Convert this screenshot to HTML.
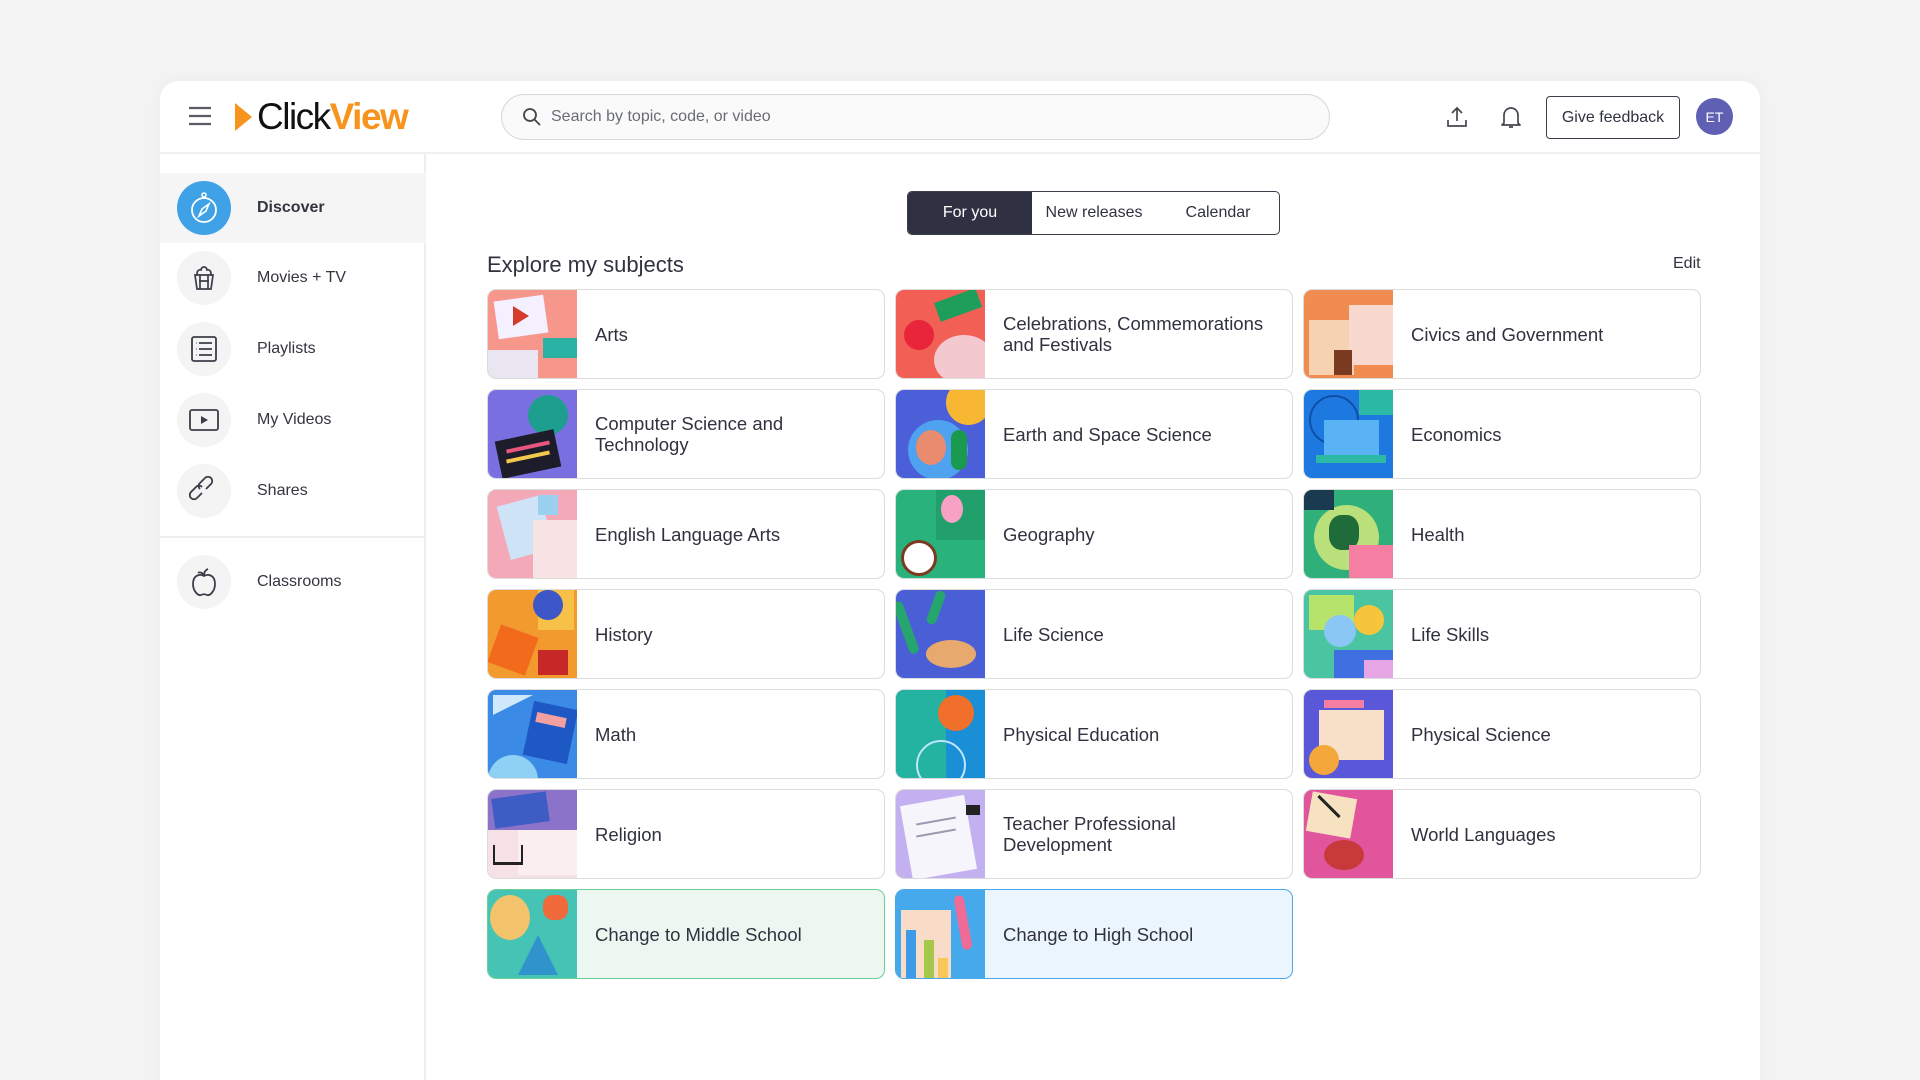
<!DOCTYPE html>
<html><head><meta charset="utf-8"><style>
*{box-sizing:border-box;margin:0;padding:0}
html,body{width:1920px;height:1080px;overflow:hidden}
body{background:#f3f3f3;font-family:"Liberation Sans",sans-serif;color:#30323f;position:relative}
.panel{position:absolute;left:160px;top:81px;width:1600px;height:1040px;background:#fff;border-radius:18px;box-shadow:0 0 14px rgba(0,0,0,0.04)}
.hdr{position:absolute;left:0;top:0;width:1600px;height:73px;border-bottom:2px solid #f0f0f0}
.side{position:absolute;left:0;top:73px;width:266px;height:967px;border-right:2px solid #eeeeee}
.nav{position:absolute;left:0;width:266px;height:70px;display:flex;align-items:center}
.nav .ic{position:absolute;left:17px;width:54px;height:54px;border-radius:50%;background:#f4f4f5;display:flex;align-items:center;justify-content:center}
.nav .lb{position:absolute;left:97px;font-size:16px;color:#33353f}
.abs{position:absolute}
.card{position:absolute;width:398px;height:90px;border:1.5px solid #dcdcdc;border-radius:9px;overflow:hidden;background:#fff}
.card .im{position:absolute;left:0;top:0;width:89px;height:90px;overflow:hidden}
.card .t{position:absolute;left:107px;top:0;height:88px;width:280px;display:flex;align-items:center;font-size:18.5px;line-height:21px;color:#30323f}
</style></head><body>
<div class="panel">
 <div class="hdr">
  <svg class="abs" style="left:28px;top:25px" width="24" height="20" viewBox="0 0 24 20"><path d="M1 2h22M1 10h22M1 18h22" stroke="#5a5c66" stroke-width="2.2"/></svg>
  <svg class="abs" style="left:75px;top:22px" width="17" height="28" viewBox="0 0 17 28"><path d="M0 0L17 14L0 28Z" fill="#f7941d"/></svg>
  <div class="abs" style="left:97px;top:15px;font-size:37px;letter-spacing:-1.5px;line-height:42px"><span style="color:#111">Click</span><span style="color:#f7941d;font-weight:bold">View</span></div>
  <div class="abs" style="left:341px;top:13px;width:829px;height:46px;border:1.5px solid #d8d8d8;border-radius:23px;background:#fafafa">
   <svg class="abs" style="left:20px;top:12px" width="20" height="20" viewBox="0 0 20 20"><circle cx="8" cy="8" r="6" stroke="#444" stroke-width="1.8" fill="none"/><path d="M12.5 12.5L18 18" stroke="#444" stroke-width="1.8"/></svg>
   <div class="abs" style="left:49px;top:13px;font-size:16px;color:#6a6c75">Search by topic, code, or video</div>
  </div>
  <svg class="abs" style="left:1285px;top:24px" width="24" height="24" viewBox="0 0 24 24"><path d="M12 16V3M7 8l5-5 5 5M3 15v6h18v-6" stroke="#45474f" stroke-width="1.7" fill="none"/></svg>
  <svg class="abs" style="left:1339px;top:23px" width="24" height="26" viewBox="0 0 24 26"><path d="M5 19V11a7 7 0 0 1 14 0v8l2 2H3z M10 23h4" stroke="#45474f" stroke-width="1.7" fill="none" stroke-linejoin="round"/></svg>
  <div class="abs" style="left:1386px;top:15px;width:134px;height:43px;border:1.5px solid #3b3d48;border-radius:4px;font-size:16px;display:flex;align-items:center;justify-content:center;color:#30323f">Give feedback</div>
  <div class="abs" style="left:1536px;top:17px;width:37px;height:37px;border-radius:50%;background:#5f5fb3;color:#fff;font-size:14px;display:flex;align-items:center;justify-content:center">ET</div>
 </div>
 <div class="side">
  <div class="nav" style="top:19px;background:#f5f5f5"><div class="ic" style="background:#3fa2e6"><svg width="34" height="36" viewBox="0 0 34 36"><circle cx="17" cy="20" r="12" stroke="#fff" stroke-width="1.8" fill="none"/><circle cx="17" cy="5" r="2" stroke="#fff" stroke-width="1.5" fill="none"/><path d="M12 26l3-7 7-5-3 7z" stroke="#fff" stroke-width="1.6" fill="none"/></svg></div><div class="lb" style="font-weight:bold">Discover</div></div>
  <div class="nav" style="top:89px"><div class="ic"><svg width="26" height="26" viewBox="0 0 26 26"><path d="M4 10h18l-2 14H6z M7 10a3 3 0 0 1 3-5 3 3 0 0 1 6 0 3 3 0 0 1 3 5 M9 10v14M17 10v14M8 16h10" stroke="#3b3d48" stroke-width="1.7" fill="none"/></svg></div><div class="lb">Movies + TV</div></div>
  <div class="nav" style="top:160px"><div class="ic"><svg width="28" height="28" viewBox="0 0 28 28"><rect x="2" y="2" width="24" height="24" rx="2" stroke="#3b3d48" stroke-width="1.8" fill="none"/><path d="M9 8h13M9 14h13M9 20h13M6 8h.5M6 14h.5M6 20h.5" stroke="#3b3d48" stroke-width="1.8"/></svg></div><div class="lb">Playlists</div></div>
  <div class="nav" style="top:231px"><div class="ic"><svg width="30" height="24" viewBox="0 0 30 24"><rect x="1" y="2" width="28" height="20" rx="2" stroke="#3b3d48" stroke-width="1.8" fill="none"/><path d="M12 8l7 4-7 4z" fill="#3b3d48"/></svg></div><div class="lb">My Videos</div></div>
  <div class="nav" style="top:302px"><div class="ic"><svg width="30" height="30" viewBox="0 0 30 30"><path d="M13 17l-5 5a4 4 0 0 1-6-6l5-5a4 4 0 0 1 6 0M17 13l5-5a4 4 0 0 0-6-6l-5 5a4 4 0 0 0 0 6" stroke="#3b3d48" stroke-width="1.8" fill="none"/></svg></div><div class="lb">Shares</div></div>
  <div class="abs" style="left:0;top:382px;width:266px;height:2px;background:#eeeeee"></div>
  <div class="nav" style="top:393px"><div class="ic"><svg width="28" height="30" viewBox="0 0 28 30"><path d="M14 9c-3-2-11-2-11 8 0 7 5 12 8 11 2-1 4-1 6 0 3 1 8-4 8-11 0-10-8-10-11-8zM14 9c0-3 1-6 4-7M14 8c-2-3-5-3-6-2" stroke="#3b3d48" stroke-width="1.8" fill="none"/></svg></div><div class="lb">Classrooms</div></div>
 </div>
 <div class="abs" style="left:747px;top:110px;width:373px;height:44px;border:1.5px solid #3b3d48;border-radius:5px;overflow:hidden;font-size:16px">
  <div class="abs" style="left:0;top:0;width:124px;height:42px;background:#2f3142;color:#fff;display:flex;align-items:center;justify-content:center">For you</div>
  <div class="abs" style="left:124px;top:0;width:124px;height:42px;display:flex;align-items:center;justify-content:center">New releases</div>
  <div class="abs" style="left:248px;top:0;width:124px;height:42px;display:flex;align-items:center;justify-content:center">Calendar</div>
 </div>
 <div class="abs" style="left:327px;top:171px;font-size:22px;color:#30323f">Explore my subjects</div>
 <div class="abs" style="left:1513px;top:174px;font-size:16px">Edit</div>
</div>

<div class="card" style="left:487px;top:289px"><div class="im" style="background:#f7978c"><div class="abs" style="left:8px;top:8px;width:50px;height:38px;background:#f4f0ff;transform:rotate(-8deg)"></div><div class="abs" style="left:25px;top:16px;border-left:16px solid #d73a2b;border-top:10px solid transparent;border-bottom:10px solid transparent"></div><div class="abs" style="left:55px;top:48px;width:34px;height:20px;background:#2ab3a5"></div><div class="abs" style="left:0;top:60px;width:50px;height:30px;background:#e9e6f2"></div></div><div class="t">Arts</div></div>
<div class="card" style="left:895px;top:289px"><div class="im" style="background:#f25f55"><div class="abs" style="left:8px;top:30px;width:30px;height:30px;border-radius:50%;background:#e8253a"></div><div class="abs" style="left:38px;top:45px;width:60px;height:50px;border-radius:50%;background:#f3c9cf"></div><div class="abs" style="left:40px;top:5px;width:44px;height:20px;background:#1e9e5a;transform:rotate(-20deg)"></div></div><div class="t">Celebrations, Commemorations and Festivals</div></div>
<div class="card" style="left:1303px;top:289px"><div class="im" style="background:#f08c50"><div class="abs" style="left:5px;top:30px;width:45px;height:55px;background:#f6d2b0"></div><div class="abs" style="left:45px;top:15px;width:44px;height:60px;background:#f9d9cf"></div><div class="abs" style="left:30px;top:60px;width:18px;height:25px;background:#7a3b20"></div></div><div class="t">Civics and Government</div></div>

<div class="card" style="left:487px;top:389px"><div class="im" style="background:#7a6fe0"><div class="abs" style="left:40px;top:5px;width:40px;height:40px;border-radius:50%;background:#1e9e8e"></div><div class="abs" style="left:10px;top:45px;width:60px;height:38px;background:#1c1c2a;transform:rotate(-12deg)"></div><div class="abs" style="left:18px;top:55px;width:44px;height:4px;background:#e8557f;transform:rotate(-12deg)"></div><div class="abs" style="left:18px;top:65px;width:44px;height:4px;background:#f2c94c;transform:rotate(-12deg)"></div></div><div class="t">Computer Science and Technology</div></div>
<div class="card" style="left:895px;top:389px"><div class="im" style="background:#4a5fd8"><div class="abs" style="left:50px;top:-10px;width:45px;height:45px;border-radius:50%;background:#f7b733"></div><div class="abs" style="left:12px;top:30px;width:60px;height:60px;border-radius:50%;background:#4ea2f0"></div><div class="abs" style="left:20px;top:40px;width:30px;height:35px;border-radius:50%;background:#e98b6e"></div><div class="abs" style="left:55px;top:40px;width:16px;height:40px;border-radius:8px;background:#1a9a4f"></div></div><div class="t">Earth and Space Science</div></div>
<div class="card" style="left:1303px;top:389px"><div class="im" style="background:#1d78e0"><div class="abs" style="left:5px;top:5px;width:50px;height:50px;border-radius:50%;border:2px solid #0f4fa8"></div><div class="abs" style="left:20px;top:30px;width:55px;height:35px;background:#5ab3f5"></div><div class="abs" style="left:12px;top:65px;width:70px;height:8px;background:#2bb8a4"></div><div class="abs" style="left:55px;top:0;width:34px;height:25px;background:#2bb8a4"></div></div><div class="t">Economics</div></div>

<div class="card" style="left:487px;top:489px"><div class="im" style="background:#f4a9b9"><div class="abs" style="left:15px;top:10px;width:45px;height:55px;background:#cfe3f7;transform:rotate(-15deg)"></div><div class="abs" style="left:45px;top:30px;width:44px;height:60px;background:#f7e3e3"></div><div class="abs" style="left:50px;top:5px;width:20px;height:20px;background:#9ad0f0"></div></div><div class="t">English Language Arts</div></div>
<div class="card" style="left:895px;top:489px"><div class="im" style="background:#29b27c"><div class="abs" style="left:40px;top:0;width:49px;height:50px;background:#22a06b"></div><div class="abs" style="left:45px;top:5px;width:22px;height:28px;border-radius:50%;background:#f7a1c4"></div><div class="abs" style="left:5px;top:50px;width:36px;height:36px;border-radius:50%;background:#fff;border:3px solid #7a3b20"></div></div><div class="t">Geography</div></div>
<div class="card" style="left:1303px;top:489px"><div class="im" style="background:#2fb07a"><div class="abs" style="left:10px;top:15px;width:65px;height:65px;border-radius:50%;background:#b9e07a"></div><div class="abs" style="left:25px;top:25px;width:30px;height:35px;border-radius:40%;background:#1f6b39"></div><div class="abs" style="left:45px;top:55px;width:44px;height:35px;background:#f47fa3"></div><div class="abs" style="left:0;top:0;width:30px;height:20px;background:#1a3b4f"></div></div><div class="t">Health</div></div>

<div class="card" style="left:487px;top:589px"><div class="im" style="background:#f29a2e"><div class="abs" style="left:50px;top:0;width:36px;height:40px;background:#f7c046"></div><div class="abs" style="left:45px;top:0;width:30px;height:30px;border-radius:50%;background:#3d57c8"></div><div class="abs" style="left:5px;top:40px;width:40px;height:40px;background:#f26a1b;transform:rotate(20deg)"></div><div class="abs" style="left:50px;top:60px;width:30px;height:25px;background:#c62828"></div></div><div class="t">History</div></div>
<div class="card" style="left:895px;top:589px"><div class="im" style="background:#4a5fd6"><div class="abs" style="left:30px;top:50px;width:50px;height:28px;border-radius:50%;background:#e8a96e"></div><div class="abs" style="left:5px;top:10px;width:10px;height:55px;border-radius:5px;background:#27a56f;transform:rotate(-20deg)"></div><div class="abs" style="left:35px;top:0;width:10px;height:35px;border-radius:5px;background:#27a56f;transform:rotate(20deg)"></div></div><div class="t">Life Science</div></div>
<div class="card" style="left:1303px;top:589px"><div class="im" style="background:#4bc4a2"><div class="abs" style="left:5px;top:5px;width:45px;height:35px;background:#b6e36a"></div><div class="abs" style="left:50px;top:15px;width:30px;height:30px;border-radius:50%;background:#f7c53c"></div><div class="abs" style="left:20px;top:25px;width:32px;height:32px;border-radius:50%;background:#8bc7f5"></div><div class="abs" style="left:30px;top:60px;width:59px;height:30px;background:#3f6fe0"></div><div class="abs" style="left:60px;top:70px;width:29px;height:20px;background:#e6a6e6"></div></div><div class="t">Life Skills</div></div>

<div class="card" style="left:487px;top:689px"><div class="im" style="background:#3a8ae6"><div class="abs" style="left:40px;top:15px;width:45px;height:55px;background:#1e58c4;transform:rotate(12deg)"></div><div class="abs" style="left:48px;top:25px;width:30px;height:10px;background:#f5a0a0;transform:rotate(12deg)"></div><div class="abs" style="left:0;top:65px;width:50px;height:25px;border-radius:25px 25px 0 0;background:#8fd0f5"></div><div class="abs" style="left:5px;top:5px;border-left:40px solid #cfe8fb;border-bottom:20px solid transparent"></div></div><div class="t">Math</div></div>
<div class="card" style="left:895px;top:689px"><div class="im" style="background:#1a8fd6"><div class="abs" style="left:0;top:0;width:50px;height:90px;background:#23b3a0"></div><div class="abs" style="left:42px;top:5px;width:36px;height:36px;border-radius:50%;background:#f06f2a"></div><div class="abs" style="left:20px;top:50px;width:50px;height:50px;border-radius:50%;border:2px solid #bfe6ff"></div></div><div class="t">Physical Education</div></div>
<div class="card" style="left:1303px;top:689px"><div class="im" style="background:#5a58d8"><div class="abs" style="left:15px;top:20px;width:65px;height:50px;background:#f8e1c8"></div><div class="abs" style="left:5px;top:55px;width:30px;height:30px;background:#f4a73a;border-radius:50%"></div><div class="abs" style="left:20px;top:10px;width:40px;height:8px;background:#f47fa3"></div></div><div class="t">Physical Science</div></div>

<div class="card" style="left:487px;top:789px"><div class="im" style="background:#f6e1e6"><div class="abs" style="left:0;top:0;width:89px;height:40px;background:#8a73c9"></div><div class="abs" style="left:5px;top:5px;width:55px;height:30px;background:#3d5dc4;transform:rotate(-8deg)"></div><div class="abs" style="left:30px;top:40px;width:59px;height:45px;background:#fbeef0"></div><div class="abs" style="left:5px;top:55px;width:30px;height:20px;border-bottom:3px solid #222;border-left:2px solid #222;border-right:2px solid #222"></div></div><div class="t">Religion</div></div>
<div class="card" style="left:895px;top:789px"><div class="im" style="background:#c3b0f0"><div class="abs" style="left:10px;top:10px;width:65px;height:75px;background:#f7f5fc;transform:rotate(-10deg)"></div><div class="abs" style="left:20px;top:30px;width:40px;height:2px;background:#9a9ab0;transform:rotate(-10deg)"></div><div class="abs" style="left:20px;top:42px;width:40px;height:2px;background:#9a9ab0;transform:rotate(-10deg)"></div><div class="abs" style="left:70px;top:15px;width:14px;height:10px;background:#222"></div></div><div class="t">Teacher Professional Development</div></div>
<div class="card" style="left:1303px;top:789px"><div class="im" style="background:#e0559b"><div class="abs" style="left:5px;top:5px;width:45px;height:40px;background:#f6e1c0;transform:rotate(10deg)"></div><div class="abs" style="left:20px;top:50px;width:40px;height:30px;border-radius:50%;background:#c83a3a"></div><div class="abs" style="left:10px;top:15px;width:30px;height:3px;background:#222;transform:rotate(45deg)"></div></div><div class="t">World Languages</div></div>

<div class="card" style="left:487px;top:889px;background:#edf7f1;border-color:#6fce95"><div class="im" style="background:#45c4b6"><div class="abs" style="left:2px;top:5px;width:40px;height:45px;border-radius:50%;background:#f2c36b"></div><div class="abs" style="left:55px;top:5px;width:25px;height:25px;background:#f06a3c;border-radius:40%"></div><div class="abs" style="left:30px;top:45px;border-left:20px solid transparent;border-right:20px solid transparent;border-bottom:40px solid #2a7fd6;opacity:.7"></div></div><div class="t">Change to Middle School</div></div>
<div class="card" style="left:895px;top:889px;background:#ebf5fd;border-color:#4aa8ea"><div class="im" style="background:#45a9ec"><div class="abs" style="left:5px;top:20px;width:50px;height:70px;background:#f8dcc7"></div><div class="abs" style="left:10px;top:40px;width:10px;height:50px;background:#3f9ae8"></div><div class="abs" style="left:28px;top:50px;width:10px;height:40px;background:#a6c84a"></div><div class="abs" style="left:42px;top:68px;width:10px;height:22px;background:#f7c75a"></div><div class="abs" style="left:62px;top:5px;width:10px;height:55px;border-radius:5px;background:#f06b96;transform:rotate(-10deg)"></div></div><div class="t">Change to High School</div></div>
</body></html>
